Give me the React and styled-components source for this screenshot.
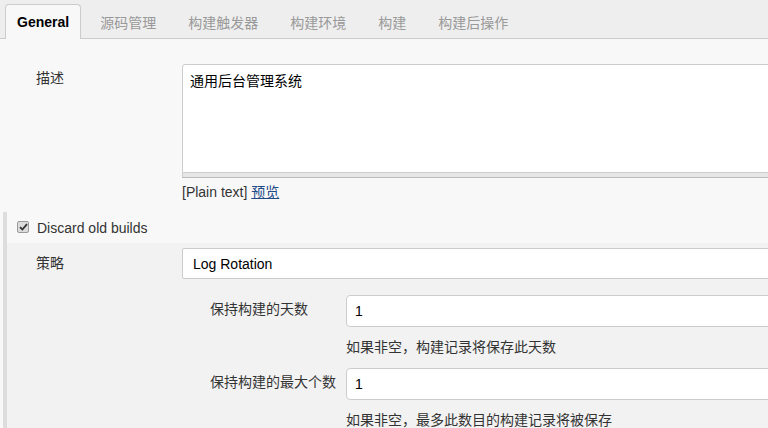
import React from "react";
import styled, { createGlobalStyle, css } from "styled-components";

const GlobalStyle = createGlobalStyle`
  html, body {
    margin: 0;
    padding: 0;
    background: #f8f8f8;
    overflow: hidden;
  }
  body {
    font-family: "Liberation Sans", Arial, "Noto Sans CJK SC", sans-serif;
    font-size: 14px;
    color: #333;
  }
  * { box-sizing: border-box; }
`;

const Page = styled.div`
  width: 768px;
  height: 428px;
  overflow: hidden;
  background: #f8f8f8;
`;

const TabBar = styled.div`
  display: flex;
  align-items: flex-end;
  gap: 6px;
  height: 39px;
  padding-left: 5px;
  background: #eeeeee;
  border-bottom: 1px solid #cccccc;
`;

const Tab = styled.div`
  height: 35px;
  margin-bottom: -1px;
  padding: 0 12px;
  display: flex;
  align-items: center;
  font-size: 14px;
  color: #999;
  border: 1px solid transparent;
  border-bottom: none;
  border-radius: 4px 4px 0 0;
  ${(p) =>
    p.$active &&
    css`
      padding: 0 11px;
      color: #000;
      font-weight: bold;
      background: #f8f8f8;
      border-color: #cccccc;
    `}
`;

const Content = styled.div`
  padding-top: 25px;
`;

const FormRow = styled.div`
  display: grid;
  grid-template-columns: ${(p) => p.$labelWidth}px 1fr;
  padding-left: ${(p) => p.$indent}px;
  align-items: start;
`;

const Label = styled.div`
  line-height: 20px;
  padding-top: ${(p) => p.$top ?? 4}px;
  color: #333;
`;

const Field = styled.div`
  margin-right: -12px;
  min-width: 0;
`;

const TextArea = styled.textarea`
  display: block;
  width: 100%;
  height: 109px;
  resize: none;
  margin: 0;
  padding: 6px 7px;
  font: inherit;
  font-size: 14px;
  line-height: 20px;
  color: #000;
  background: #fff;
  border: 1px solid #cccccc;
  border-radius: 3px 0 0 0;
  outline: none;
`;

const Grippie = styled.div`
  height: 5px;
  background: #e6e6e6;
  border-bottom: 1px solid #bbbbbb;
  border-left: 1px solid #cccccc;
`;

const PreviewLine = styled.div`
  margin-top: 6px;
  line-height: 16px;
  color: #333;
`;

const PreviewLink = styled.a`
  color: #204a87;
  text-decoration: underline;
  cursor: pointer;
`;

const Section = styled.div`
  margin-top: 12px;
  margin-left: 3px;
  border-left: 4px solid #dddddd;
`;

const SectionHeader = styled.label`
  display: flex;
  align-items: center;
  gap: 8px;
  height: 31px;
  padding: 0 0 0 10px;
  color: #333;
`;

const CheckBox = styled.span`
  width: 12px;
  height: 12px;
  display: inline-flex;
  align-items: center;
  justify-content: center;
  background: #dcdcdc;
  border: 1px solid #9a9a9a;
  border-radius: 2px;
  margin-top: -2px;
`;

const Nested = styled.div`
  background: #f2f2f2;
  padding-top: 5px;
  padding-bottom: 20px;
`;

const Select = styled.div`
  height: 31px;
  display: flex;
  align-items: center;
  padding-left: 10px;
  background: #fff;
  border: 1px solid #cccccc;
  border-radius: 2px 0 0 2px;
  color: #000;
`;

const SubBlock = styled.div`
  margin-top: 16px;
  margin-left: 203px;
  display: flex;
  flex-direction: column;
`;

const SubRow = styled.div`
  display: grid;
  grid-template-columns: 136px 1fr;
  align-items: start;
  & + & {
    margin-top: 11px;
  }
`;

const TextInput = styled.input`
  display: block;
  width: 100%;
  height: 32px;
  margin: 0;
  padding: 0 8px;
  font: inherit;
  font-size: 14px;
  color: #000;
  background: #fff;
  border: 1px solid #cccccc;
  border-radius: 4px 0 0 4px;
  outline: none;
`;

const Help = styled.div`
  margin-top: 10px;
  line-height: 20px;
  color: #333;
`;

const tabs = ["General", "源码管理", "构建触发器", "构建环境", "构建", "构建后操作"];

const subFields = [
  { label: "保持构建的天数", value: "1", help: "如果非空，构建记录将保存此天数" },
  { label: "保持构建的最大个数", value: "1", help: "如果非空，最多此数目的构建记录将被保存" },
];

export default function App() {
  return (
    <Page>
      <GlobalStyle />
      <TabBar>
        {tabs.map((t, i) => (
          <Tab key={t} $active={i === 0}>
            {t}
          </Tab>
        ))}
      </TabBar>
      <Content>
        <FormRow $labelWidth={146} $indent={36}>
          <Label>描述</Label>
          <Field>
            <TextArea readOnly defaultValue="通用后台管理系统" />
            <Grippie />
            <PreviewLine>
              [Plain text] <PreviewLink>预览</PreviewLink>
            </PreviewLine>
          </Field>
        </FormRow>
        <Section>
          <SectionHeader>
            <CheckBox>
              <svg width="9" height="8" viewBox="0 0 9 8">
                <path d="M1 4.2 L3.4 6.5 L8 1.2" fill="none" stroke="#333" strokeWidth="1.8" />
              </svg>
            </CheckBox>
            Discard old builds
          </SectionHeader>
          <Nested>
            <FormRow $labelWidth={146} $indent={29}>
              <Label $top={5}>策略</Label>
              <Field>
                <Select>Log Rotation</Select>
              </Field>
            </FormRow>
            <SubBlock>
              {subFields.map((f) => (
                <SubRow key={f.label}>
                  <Label $top={4}>{f.label}</Label>
                  <Field>
                    <TextInput readOnly defaultValue={f.value} />
                    <Help>{f.help}</Help>
                  </Field>
                </SubRow>
              ))}
            </SubBlock>
          </Nested>
        </Section>
      </Content>
    </Page>
  );
}
